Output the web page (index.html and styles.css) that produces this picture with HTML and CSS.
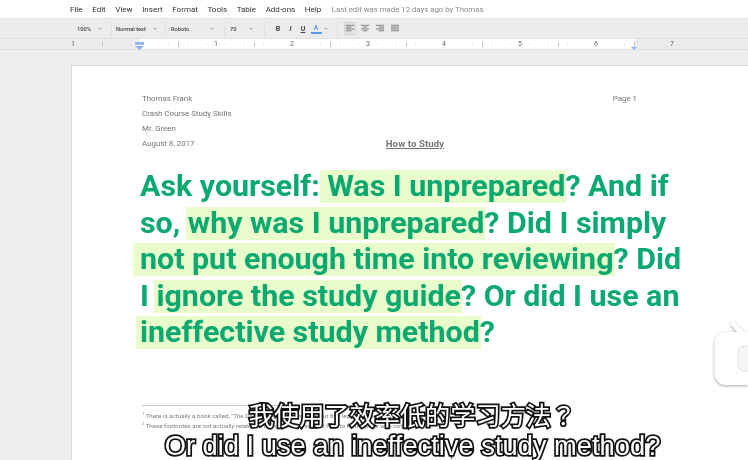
FILE: index.html
```html
<!DOCTYPE html>
<html lang="en">
<head>
<meta charset="utf-8">
<title>How to Study</title>
<link rel="stylesheet" href="styles.css">
</head>
<body>
<div class="screen">
  <header class="chrome">
    <nav class="menubar">
      <span>File</span><span>Edit</span><span>View</span><span>Insert</span><span>Format</span><span>Tools</span><span>Table</span><span>Add-ons</span><span>Help</span>
      <span class="last-edit">Last edit was made 12 days ago by Thomas</span>
    </nav>
    <div class="toolbar">
      <div class="tool w-zoom"><b>100%</b><i class="caret"></i></div>
      <div class="tool w-style"><b>Normal text</b><i class="caret"></i></div>
      <div class="tool w-font"><b>Roboto</b><i class="caret"></i></div>
      <div class="tool w-size"><b>70</b><i class="caret"></i></div>
      <div class="tool w-format">
        <span class="fmt bold">B</span><span class="fmt italic">I</span><span class="fmt under">U</span><span class="fmt color">A</span><i class="caret"></i>
      </div>
      <div class="tool w-align">
        <span class="align active"><svg width="11" height="9" viewBox="0 0 11 9"><path d="M1 1h9M1 3h6M1 5h9M1 7h6" /></svg></span>
        <span class="align"><svg width="11" height="9" viewBox="0 0 11 9"><path d="M1 1h9M3 3h5M1 5h9M3 7h5" /></svg></span>
        <span class="align"><svg width="11" height="9" viewBox="0 0 11 9"><path d="M1 1h9M4 3h6M1 5h9M4 7h6" /></svg></span>
        <span class="align"><svg width="11" height="9" viewBox="0 0 11 9"><path d="M1 1h9M1 3h9M1 5h9M1 7h9" /></svg></span>
      </div>
    </div>
    <div class="ruler">
      <div class="cell first"><span>1</span></div>
      <div class="cell"><span class="marker-left"></span></div>
      <div class="cell"><span>1</span></div>
      <div class="cell"><span>2</span></div>
      <div class="cell"><span>3</span></div>
      <div class="cell"><span>4</span></div>
      <div class="cell"><span>5</span></div>
      <div class="cell"><span>6</span></div>
      <div class="cell"><span>7</span></div>
      <span class="marker-right"></span>
    </div>
  </header>
  <main class="canvas">
    <article class="page">
      <div class="meta">
        <div class="meta-row"><span>Thomas Frank</span><span class="page-no">Page 1</span></div>
        <div class="meta-row"><span>Crash Course Study Skills</span></div>
        <div class="meta-row"><span>Mr. Green</span></div>
        <div class="meta-row date-row"><span>August 8, 2017</span><span class="doc-title">How to Study</span></div>
      </div>
      <div class="quote">
        <div class="line">Ask yourself: <mark class="m1">Was I unprepared</mark>? And if</div>
        <div class="line">so, <mark class="m2">why was I unprepared</mark>? Did I simply</div>
        <div class="line"><mark class="m3">not put enough time into reviewing</mark>? Did</div>
        <div class="line">I <mark class="m4">ignore the study guide</mark>? Or did I use an</div>
        <div class="line"><mark class="m5">ineffective study method</mark>?</div>
      </div>
      <div class="notes">
        <p><sup>1</sup> There is actually a book called, "The Dog Ate My Homework," about this legendary excuse.</p>
        <p><sup>2</sup> These footnotes are not actually related to the video, they are just here to fill the page with nothing.</p>
      </div>
    </article>
  </main>
  <svg class="mascot" width="40" height="70" viewBox="0 0 40 70">
    <path class="antenna" d="M25 5 L34 14" />
    <rect class="body" x="6.5" y="13" width="50" height="53" rx="11" />
    <rect class="face" x="30" y="27" width="30" height="25" rx="6" />
  </svg>
  <div class="subtitles">
    <div class="sub-zh">我使用了效率低的学习方法<span class="q">？</span></div>
    <div class="sub-en">Or did I use an ineffective study method?</div>
  </div>
</div>
</body>
</html>
```
FILE: styles.css
```css
* { box-sizing: border-box; }
html, body { margin: 0; padding: 0; }
body { background: #eee; font-family: Roboto, "Liberation Sans", sans-serif; }
.screen { position: relative; width: 748px; height: 460px; overflow: hidden; background: #eee; }
.chrome { filter: blur(0.4px); }

.menubar { height: 18px; background: #fff; display: flex; align-items: center; padding-left: 70px; gap: 9.6px; font-size: 8px; color: #333; }
.last-edit { margin-left: 1px; color: #8a8a8a; font-size: 7.8px; }

.toolbar { height: 21px; background: #ececec; border-top: 1px solid #e2e2e2; border-bottom: 1px solid #e0e0e0; display: flex; align-items: center; padding-left: 72px; font-size: 5.7px; color: #444; }
.tool { height: 15px; display: flex; align-items: center; justify-content: space-between; padding: 0 5px; border-right: 1px solid #e0e0e0; }
.tool b { font-weight: 500; }
.caret { width: 0; height: 0; border-left: 2px solid transparent; border-right: 2px solid transparent; border-top: 2px solid #b5b5b5; }
.w-zoom { width: 40px; padding-right: 9px; }
.w-style { width: 54px; padding-right: 8px; padding-left: 4px; }
.w-font { width: 59px; padding-right: 10px; }
.w-size { width: 40px; padding-right: 11px; }
.w-format { width: 73px; padding-left: 8px; padding-right: 9px; }
.fmt { font-size: 7px; font-weight: 700; width: 10px; text-align: center; }
.italic { font-style: italic; }
.under { text-decoration: underline; }
.color { color: #5a8fd8; border-bottom: 2px solid #5c9ae8; line-height: 8px; font-weight: 500; width: 11px; }
.w-align { border-right: 0; padding-left: 6px; gap: 3px; justify-content: flex-start; }
.align { width: 12px; height: 13px; display: flex; align-items: center; justify-content: center; border: 1px solid transparent; }
.align.active { border-color: #d4d4d4; background: #e4e4e4; }
.align path { fill: none; stroke: #777; stroke-width: 1; }

.ruler { position: relative; height: 11px; display: flex; padding-left: 71px; border-bottom: 1px solid #e0e0e0; background: linear-gradient(to right, #ececec 139px, #fff 139px, #fff 635px, #ececec 635px); font-size: 7px; color: #666; }
.cell { position: relative; flex: 0 0 76px; display: flex; align-items: center; justify-content: center;
  background:
    linear-gradient(#c4c4c4, #c4c4c4) 0 3px / 1px 5px no-repeat,
    repeating-linear-gradient(to right, transparent 0, transparent 9px, #d4d4d4 9px, #d4d4d4 10px, transparent 10px, transparent 19px) 0 5px / 100% 1px no-repeat; }
.cell.first { flex-basis: 31px; justify-content: flex-start; background: repeating-linear-gradient(to left, transparent 0, transparent 9px, #d4d4d4 9px, #d4d4d4 10px, transparent 10px, transparent 19px) 0 5px / 100% 1px no-repeat; }
.marker-left { position: absolute; left: 33px; top: 3px; width: 9px; height: 8px; background: #8fb4f0; clip-path: polygon(0 0, 100% 0, 100% 35%, 0 35%, 0 50%, 100% 50%, 50% 100%, 0 50%); }
.marker-right { position: absolute; left: 631px; top: 8px; width: 0; height: 0; border-left: 3px solid transparent; border-right: 3px solid transparent; border-top: 3px solid #8fb4f0; }

.canvas { padding: 15px 0 0 71px; }
.page { background: #fff; border-top: 1px solid #d6d6d6; border-left: 1px solid #d6d6d6; height: 420px; padding: 25px 0 0 70px; width: 700px; filter: blur(0.4px); }
.meta { width: 546px; font-size: 7.9px; line-height: 15px; color: #757575; }
.meta-row { display: flex; justify-content: space-between; padding-right: 51px; }
.date-row { display: grid; grid-template-columns: 1fr auto 1fr; padding-right: 0; }
.doc-title { font-size: 9.6px; font-weight: 700; text-decoration: underline; letter-spacing: 0.1px; }

.quote { margin-top: 17px; width: 560px; font-size: 30.4px; line-height: 36.5px; font-weight: 700; color: #0aa970; white-space: nowrap; margin-left: -2px; }
.line { height: 36.5px; }
mark { color: inherit; background: linear-gradient(#e9fccb, #e9fccb) 0 2px / 100% 33px no-repeat; padding: 0 1px 0 7px; margin: 0 -1px 0 -7px; }
.m2, .m4 { padding-left: 2px; margin-left: -2px; }
.m5 { padding-left: 4px; margin-left: -4px; }

.notes { margin-top: 54px; width: 150px; border-top: 1px solid #ccc; padding-top: 5px; font-size: 6.2px; line-height: 10px; color: #808080; white-space: nowrap; }
.notes p { margin: 0; }
.notes sup { font-size: 4px; line-height: 0; }

.mascot { position: absolute; right: 0; top: 319px; filter: drop-shadow(0 1px 1.5px rgba(0,0,0,.35)); overflow: hidden; }
.mascot .antenna { stroke: #fff; stroke-width: 5; stroke-linecap: round; fill: none; }
.mascot .body { fill: #fff; }
.mascot .face { fill: #f6f6f6; stroke: #e2e2e2; stroke-width: 1; }

.subtitles { position: absolute; left: 0; right: 0; top: 399px; text-align: center; padding-left: 77px; color: #fff; font-family: "Liberation Sans", "Noto Sans CJK SC", sans-serif; white-space: nowrap; filter: blur(0.3px); }
.sub-zh, .sub-en { -webkit-text-stroke: 3.5px #111; paint-order: stroke fill; }
.sub-zh { font-size: 25.2px; line-height: 30px; }
.sub-en { font-size: 27.3px; line-height: 30px; }
.q { font-family: "Noto Sans CJK JP", sans-serif; }
```
